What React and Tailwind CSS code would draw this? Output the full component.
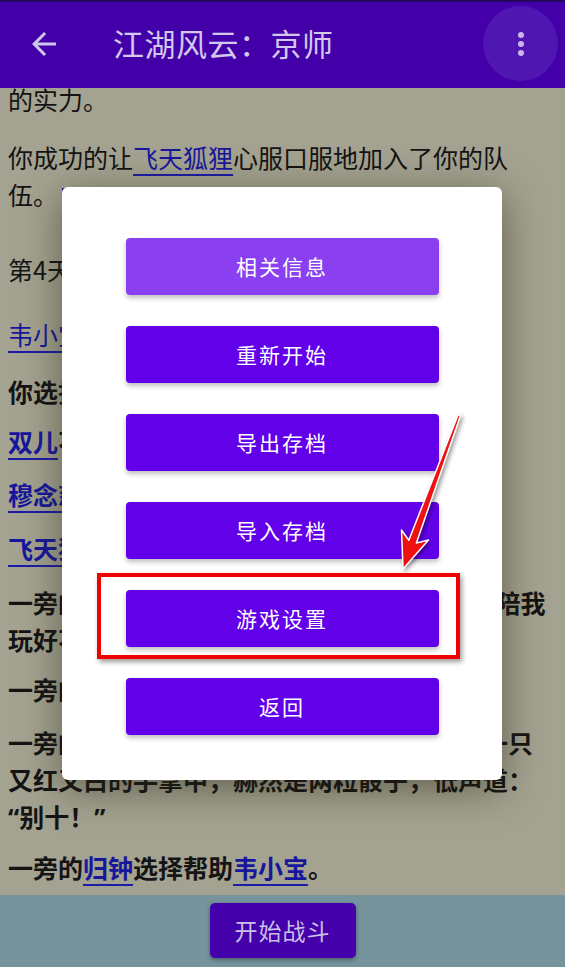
import React from 'react';

const cjk = "font-['Noto_Sans_CJK_SC','Noto_Sans',sans-serif]";

const Link = ({ children }) => (
  <span className="text-[#17179c] underline decoration-[2px] underline-offset-[6px] decoration-[#1c1ca8]">
    {children}
  </span>
);

// narrow latin quote marks, as the reference shows them
const Q = ({ children }) => <span className="font-['Noto_Sans',sans-serif]">{children}</span>;

const menuItems = ['相关信息', '重新开始', '导出存档', '导入存档', '游戏设置', '返回'];

export default function App() {
  return (
    <div className={`relative h-[967px] w-full overflow-hidden flex flex-col ${cjk}`}>
      {/* App bar */}
      <header className="h-[88px] shrink-0 bg-[#4300a8] border-t-2 border-[#22075a] flex items-center relative">
        <svg className="ml-[26px] -mt-[3px]" width="36" height="36" viewBox="0 0 24 24" fill="#cfc4ea">
          <path d="M20 11H7.83l5.59-5.59L12 4l-8 8 8 8 1.41-1.41L7.83 13H20v-2z" />
        </svg>
        <h1 className="ml-[51px] -mt-[4px] text-[31px] text-[#d2c8ec] tracking-[0.5px]">江湖风云：京师</h1>
        <div className="ml-auto mr-[7px] -mt-[3px] w-[75px] h-[75px] rounded-full bg-[#4f16b2] flex items-center justify-center">
          <svg width="36" height="36" viewBox="0 0 24 24" fill="#c9b9ea">
            <circle cx="12" cy="6" r="2" />
            <circle cx="12" cy="12" r="2" />
            <circle cx="12" cy="18" r="2" />
          </svg>
        </div>
      </header>

      {/* Story text */}
      <main className="flex-1 bg-[#a4a290] px-2 overflow-hidden whitespace-nowrap text-[25px] leading-[37px] text-[#141414]">
        <p className="-mt-[7px]">的实力。</p>
        <p className="mt-[21px]">
          你成功的让<Link>飞天狐狸</Link>心服口服地加入了你的队<br />
          伍。
          <span className="inline-block align-middle ml-[4px] w-[20px] h-[20px] border-2 border-[#1a1aa0]"></span>
        </p>
        <p className="mt-[38px]">第4天，你来到了京师。</p>
        <p className="mt-[28px]"><Link>韦小宝</Link>向你发起了挑战！</p>
        <p className="mt-[20px] font-bold">你选择了同伴出战。</p>
        <p className="mt-[13px] font-bold"><Link>双儿</Link>不愿意出手。</p>
        <p className="mt-[16px] font-bold"><Link>穆念慈</Link>不愿意出手。</p>
        <p className="mt-[17px] font-bold"><Link>飞天狐狸</Link>不愿意出手。</p>
        <p className="mt-[17px] font-bold">
          一旁的韦小宝笑嘻嘻地道：“这位大哥，你来陪我<br />
          玩好不好？”
        </p>
        <p className="mt-[13px] font-bold">一旁的双儿默不作声。</p>
        <p className="mt-[16px] font-bold">
          一旁的韦小宝伸出右手，众人只见他摊开了一只<br />
          又红又白的手掌中，赫然是两粒骰子，低声道：<br />
          <Q>“</Q>别十！<Q>”</Q>
        </p>
        <p className="mt-[13px] font-bold">
          一旁的<Link>归钟</Link>选择帮助<Link>韦小宝</Link>。
        </p>
      </main>

      {/* Bottom bar */}
      <footer className="h-[72px] shrink-0 bg-[#76949c] flex justify-center pt-[8px]">
        <button className="w-[146px] h-[55px] rounded-[5px] bg-[#4400aa] text-[#cbbfe8] text-[23px] tracking-[1px] shadow-[0_2px_4px_rgba(0,0,0,0.35)]">
          开始战斗
        </button>
      </footer>

      {/* Menu dialog */}
      <div className="absolute left-[62px] top-[187px] w-[440px] h-[593px] bg-white rounded-[6px] shadow-[0_8px_40px_rgba(40,38,20,0.55)] flex flex-col items-center pt-[51px] gap-[31px]">
        {menuItems.map((label, i) => (
          <button
            key={label}
            className={`w-[313px] h-[57px] rounded-[4px] text-white text-[21px] tracking-[2px] shadow-[0_3px_5px_rgba(0,0,0,0.25)] ${
              i === 0 ? 'bg-[#8a40f1]' : 'bg-[#6200ea]'
            }`}
          >
            {label}
          </button>
        ))}
      </div>

      {/* Annotation: red frame */}
      <div className="absolute left-[97px] top-[573px] w-[363px] h-[86px] border-[4px] border-[#f20000] shadow-[2px_3px_5px_rgba(0,0,0,0.4)]"></div>

      {/* Annotation: arrow */}
      <svg
        className="absolute left-0 top-0 pointer-events-none drop-shadow-[2px_2px_2px_rgba(0,0,0,0.4)]"
        width="565"
        height="967"
        viewBox="0 0 565 967"
      >
        <polygon
          points="403,569 428.5,540 416.4,543.1 460.5,415.5 458.2,414.6 408.8,540.3 401.5,530"
          fill="#ee1111"
          stroke="#ffffff"
          strokeWidth="1.5"
          strokeLinejoin="round"
        />
      </svg>
    </div>
  );
}
